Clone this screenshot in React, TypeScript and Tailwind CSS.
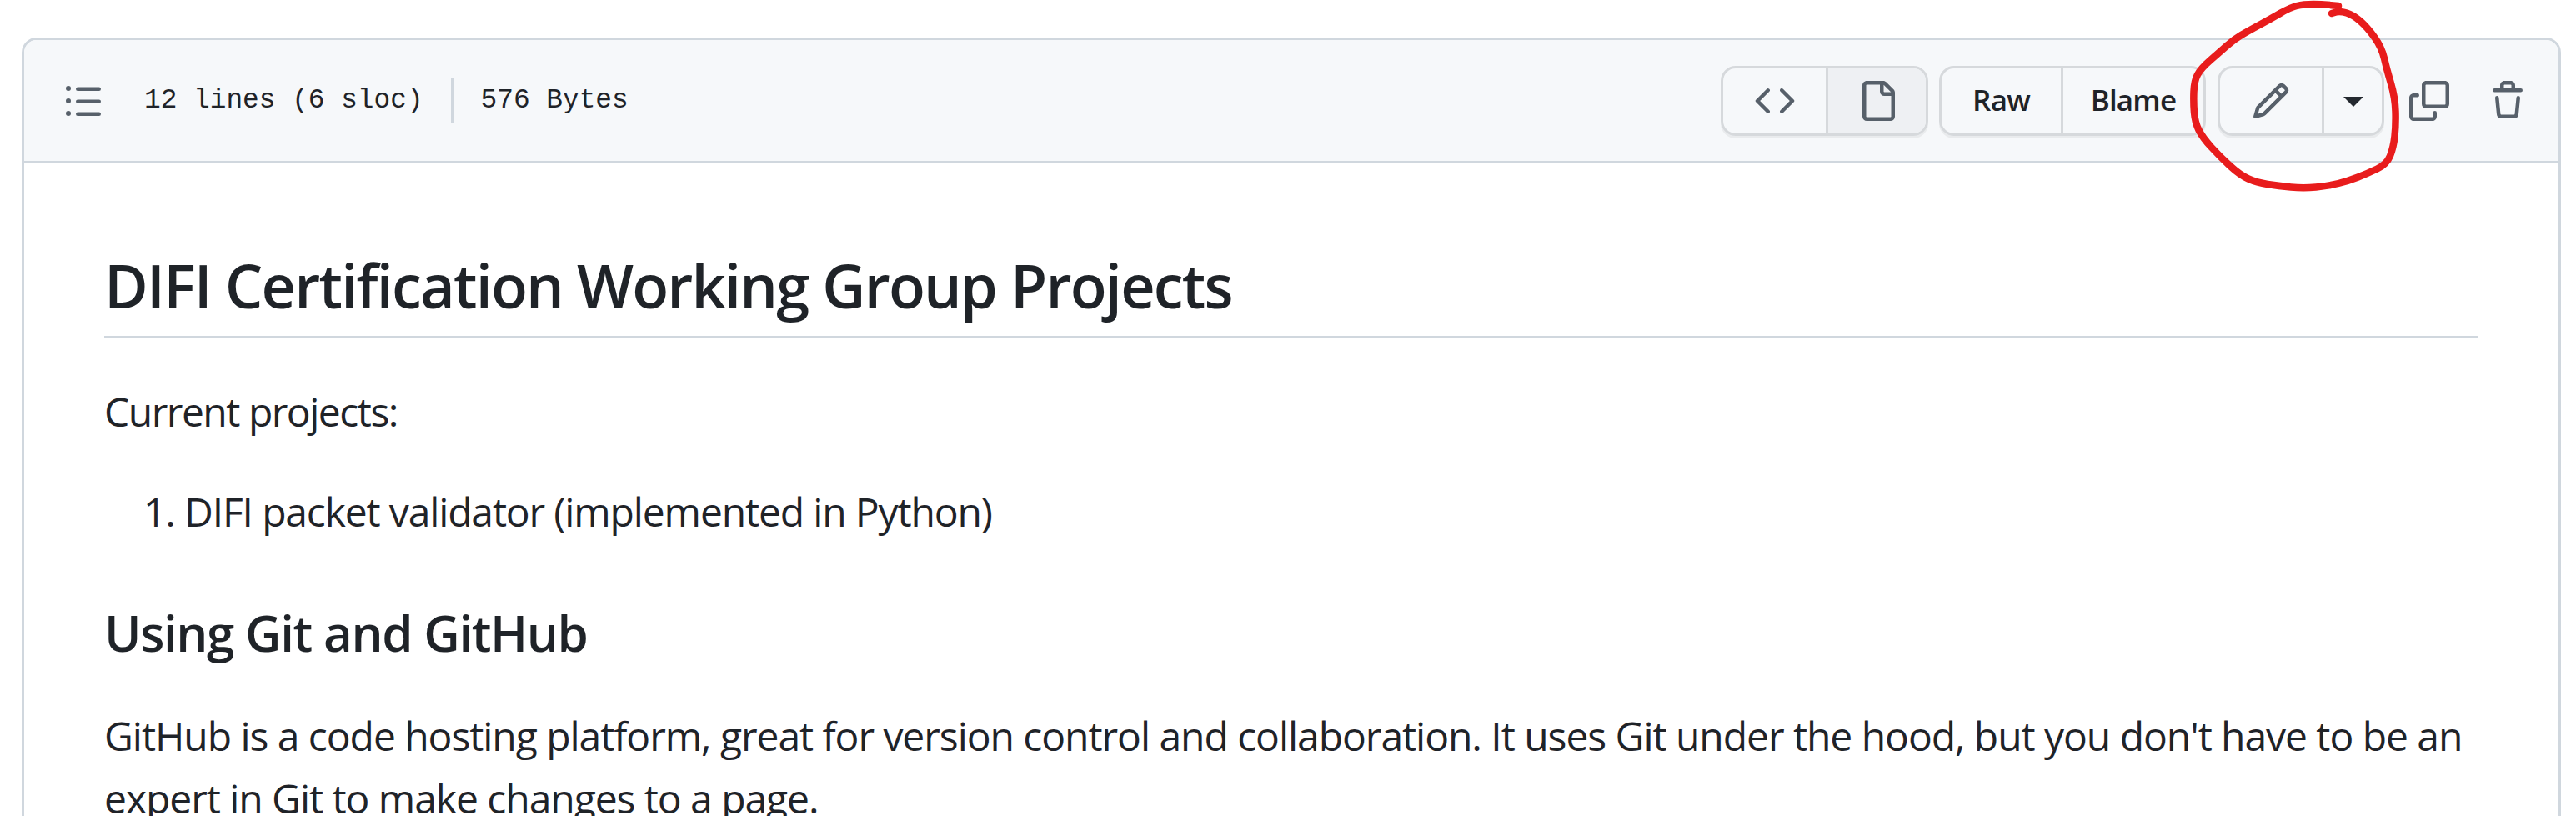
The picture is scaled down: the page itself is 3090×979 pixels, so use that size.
// App.tsx
const LIST_ICON =
  'M5.75 2.5h8.5a.75.75 0 0 1 0 1.5h-8.5a.75.75 0 0 1 0-1.5Zm0 5h8.5a.75.75 0 0 1 0 1.5h-8.5a.75.75 0 0 1 0-1.5Zm0 5h8.5a.75.75 0 0 1 0 1.5h-8.5a.75.75 0 0 1 0-1.5ZM2 14a1 1 0 1 1 0-2 1 1 0 0 1 0 2Zm1-6a1 1 0 1 1-2 0 1 1 0 0 1 2 0ZM2 4a1 1 0 1 1 0-2 1 1 0 0 1 0 2Z'
const CODE_ICON =
  'm11.28 3.22 4.25 4.25a.75.75 0 0 1 0 1.06l-4.25 4.25a.749.749 0 0 1-1.275-.326.749.749 0 0 1 .215-.734L13.94 8l-3.72-3.72a.749.749 0 0 1 .326-1.275.749.749 0 0 1 .734.215Zm-6.56 0a.751.751 0 0 1 1.042.018.751.751 0 0 1 .018 1.042L2.06 8l3.72 3.72a.749.749 0 0 1-.326 1.275.749.749 0 0 1-.734-.215L.47 8.53a.75.75 0 0 1 0-1.06Z'
const FILE_ICON =
  'M2 1.75C2 .784 2.784 0 3.75 0h6.586c.464 0 .909.184 1.237.513l2.914 2.914c.329.328.513.773.513 1.237v9.586A1.75 1.75 0 0 1 13.25 16h-9.5A1.75 1.75 0 0 1 2 14.25Zm1.75-.25a.25.25 0 0 0-.25.25v12.5c0 .138.112.25.25.25h9.5a.25.25 0 0 0 .25-.25V6h-2.75A1.75 1.75 0 0 1 9 4.25V1.5Zm6.75.062V4.25c0 .138.112.25.25.25h2.688l-.011-.013-2.914-2.914-.013-.011Z'
const PENCIL_ICON =
  'M11.013 1.427a1.75 1.75 0 0 1 2.474 0l1.086 1.086a1.75 1.75 0 0 1 0 2.474l-8.61 8.61c-.21.21-.47.364-.756.445l-3.251.93a.75.75 0 0 1-.927-.928l.929-3.25c.081-.286.235-.547.445-.758l8.61-8.61Zm.176 4.823L9.75 4.81l-6.286 6.287a.253.253 0 0 0-.064.108l-.558 1.953 1.953-.558a.253.253 0 0 0 .108-.064Zm1.238-3.763a.25.25 0 0 0-.354 0L10.811 3.75l1.439 1.44 1.263-1.263a.25.25 0 0 0 0-.354Z'
const COPY_ICON =
  'M0 6.75C0 5.784.784 5 1.75 5h1.5a.75.75 0 0 1 0 1.5h-1.5a.25.25 0 0 0-.25.25v7.5c0 .138.112.25.25.25h7.5a.25.25 0 0 0 .25-.25v-1.5a.75.75 0 0 1 1.5 0v1.5A1.75 1.75 0 0 1 9.25 16h-7.5A1.75 1.75 0 0 1 0 14.25ZM5 1.75C5 .784 5.784 0 6.75 0h7.5C15.216 0 16 .784 16 1.75v7.5A1.75 1.75 0 0 1 14.25 11h-7.5A1.75 1.75 0 0 1 5 9.25Zm1.75-.25a.25.25 0 0 0-.25.25v7.5c0 .138.112.25.25.25h7.5a.25.25 0 0 0 .25-.25v-7.5a.25.25 0 0 0-.25-.25Z'
const TRASH_ICON =
  'M11 1.75V3h2.25a.75.75 0 0 1 0 1.5H2.75a.75.75 0 0 1 0-1.5H5V1.75C5 .784 5.784 0 6.75 0h2.5C10.216 0 11 .784 11 1.75ZM4.496 6.675l.66 6.6a.25.25 0 0 0 .249.225h5.19a.25.25 0 0 0 .249-.225l.66-6.6a.75.75 0 0 1 1.492.149l-.66 6.6A1.748 1.748 0 0 1 10.595 15h-5.19a1.75 1.75 0 0 1-1.741-1.575l-.66-6.6a.75.75 0 1 1 1.492-.15ZM6.5 1.75V3h3V1.75a.25.25 0 0 0-.25-.25h-2.5a.25.25 0 0 0-.25.25Z'

// the red pen stroke, traced from the screenshot
const CIRCLE_POINTS = [
  [2805, 7], [2787, 5], [2763, 5], [2747, 9], [2723, 23], [2697, 37], [2680, 47], [2663, 62],
  [2640, 82], [2632, 97], [2631, 123], [2633, 147], [2642, 165], [2663, 188], [2687, 210],
  [2707, 219], [2733, 223], [2763, 226], [2793, 223], [2817, 217], [2840, 208], [2863, 197],
  [2871, 177], [2874, 150], [2873, 117], [2863, 83], [2857, 57], [2840, 33], [2823, 18],
  [2807, 13], [2797, 16],
]

function smoothPath(points: number[][]) {
  let d = `M${points[0][0]} ${points[0][1]}`
  for (let i = 1; i < points.length - 1; i++) {
    const [x, y] = points[i]
    const [nx, ny] = points[i + 1]
    d += ` Q${x} ${y} ${(x + nx) / 2} ${(y + ny) / 2}`
  }
  const last = points[points.length - 1]
  return d + ` L${last[0]} ${last[1]}`
}

function Octicon({ d, size = 48 }: { d: string; size?: number }) {
  return (
    <svg width={size} height={size} viewBox="0 0 16 16" fill="#57606a" className="shrink-0">
      <path d={d} />
    </svg>
  )
}

const groupClass =
  'flex h-[84px] rounded-[18px] border-[3px] border-[#d6d9dc] shadow-[0_3px_0_rgba(31,35,40,0.06)] overflow-hidden'

export default function App() {
  return (
    <div className="relative h-[979px] w-[3090px] overflow-hidden bg-white pt-[45px] pl-[26px] pr-[18px] text-[#1f2328] font-['Open_Sans','Liberation_Sans',sans-serif]">
      <div className="h-[1000px] rounded-t-[18px] border-[3px] border-[#d0d7de]">
        {/* file toolbar */}
        <div className="flex h-[148px] items-center rounded-t-[15px] border-b-[3px] border-[#d0d7de] bg-[#f6f8fa] pl-[47px] pr-[34px]">
          <Octicon d={LIST_ICON} />
          <div className="ml-[49px] flex items-center font-['Liberation_Mono',monospace] text-[32.8px] leading-[48px]">
            <span>12 lines (6 sloc)</span>
            <span className="mx-[33px] h-[54px] w-[3px] bg-[#d0d7de]" />
            <span>576 Bytes</span>
          </div>

          <div className="ml-auto flex items-center">
            <div className={groupClass + ' w-[249px]'}>
              <div className="flex w-[123px] items-center justify-center">
                <Octicon d={CODE_ICON} />
              </div>
              <div className="flex flex-1 items-center justify-center border-l-[3px] border-[#d6d9dc] bg-[#eef0f3]">
                <Octicon d={FILE_ICON} />
              </div>
            </div>
            <div className={groupClass + ' ml-[13px] w-[320px] text-[35px] font-semibold tracking-[-0.8px]'}>
              <div className="flex w-[143px] items-center justify-center">Raw</div>
              <div className="flex flex-1 items-center justify-center border-l-[3px] border-[#d6d9dc]">Blame</div>
            </div>
            <div className={groupClass + ' ml-[14px] w-[200px]'}>
              <div className="flex w-[122px] items-center justify-center">
                <Octicon d={PENCIL_ICON} />
              </div>
              <div className="flex flex-1 items-center justify-center border-l-[3px] border-[#d6d9dc]">
                <span className="mt-[3px] h-0 w-0 border-x-[12px] border-t-[12px] border-x-transparent border-t-[#24292f]" />
              </div>
            </div>
            <div className="ml-[30px]">
              <Octicon d={COPY_ICON} />
            </div>
            <div className="ml-[46px] mr-[3px]">
              <Octicon d={TRASH_ICON} />
            </div>
          </div>
        </div>

        {/* readme */}
        <div className="px-[96px] pt-[101px] text-[48px] leading-[72px]">
          <h2 className="border-b-[3px] border-[#d0d7de] pb-[16px] text-[72px] font-semibold leading-[90px] tracking-[-1.8px]">
            DIFI Certification Working Group Projects
          </h2>
          <p className="mt-[52px] tracking-[-1.5px]">Current projects:</p>
          <ol className="mt-[48px] list-decimal pl-[96px] tracking-[-1.15px]">
            <li>DIFI packet validator (implemented in Python)</li>
          </ol>
          <h3 className="mt-[72px] text-[60px] font-semibold leading-[75px] tracking-[-1.4px]">Using Git and GitHub</h3>
          <p className="mt-[48px] leading-[75px] tracking-[-1.05px]">
            GitHub is a code hosting platform, great for version control and collaboration. It uses Git under the hood, but
            you don't have to be an expert in Git to make changes to a page.
          </p>
        </div>
      </div>

      {/* hand drawn annotation */}
      <svg className="absolute left-0 top-0" width="3090" height="979" viewBox="0 0 3090 979" fill="none">
        <path d={smoothPath(CIRCLE_POINTS)} stroke="#e81c1c" strokeWidth="8.5" strokeLinecap="round" strokeLinejoin="round" />
      </svg>
    </div>
  )
}
